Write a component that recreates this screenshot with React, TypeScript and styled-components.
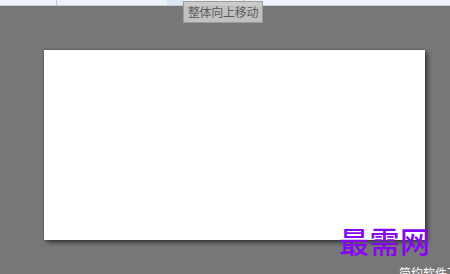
import React from "react";
import styled, { createGlobalStyle } from "styled-components";

const Global = createGlobalStyle`
  html, body { margin: 0; padding: 0; }
  body { width: 450px; height: 274px; overflow: hidden; background: #777777; font-family: "Noto Sans CJK SC", "Noto Sans", sans-serif; }
`;

const Screen = styled.div`
  position: relative;
  width: 450px;
  height: 274px;
  display: flex;
  flex-direction: column;
  overflow: hidden;
  background: #777777;
`;

const TopStrip = styled.div`
  height: 5px;
  background: #eef3fb;
  border-bottom: 1px solid #c9ccd1;
  display: flex;
  flex-shrink: 0;
`;

const StripCell = styled.div<{ $w: number; $active?: boolean; $divider?: boolean }>`
  width: ${(p) => p.$w}px;
  height: 100%;
  background: ${(p) => (p.$active ? "#dbe7f7" : "transparent")};
  border-right: ${(p) => (p.$divider ? "1px solid #c6cbd2" : "none")};
  flex-shrink: 0;
`;

const Stage = styled.div`
  flex: 1;
  padding: 44px 0 0 44px;
`;

const Slide = styled.div`
  width: 381px;
  height: 190px;
  background: #ffffff;
  box-shadow: 0 0 2px rgba(0, 0, 0, 0.45), 3px 3px 4px rgba(0, 0, 0, 0.45);
`;

const Tooltip = styled.div`
  position: absolute;
  left: 183px;
  top: 1px;
  width: 78px;
  height: 20px;
  background: rgba(200, 200, 200, 0.92);
  border: 1px solid #9c9c9c;
  display: flex;
  align-items: center;
  justify-content: center;
  font-size: 12px;
  color: #5b5b5b;
  line-height: 1;
  letter-spacing: -0.3px;
`;

const Watermark = styled.div`
  position: absolute;
  left: 339px;
  top: 225px;
  font-family: "Noto Sans CJK SC", sans-serif;
  font-size: 30px;
  font-weight: 500;
  line-height: 1;
  color: #8506f0;
  letter-spacing: 0.5px;
`;

const Caption = styled.div`
  position: absolute;
  left: 399px;
  top: 267px;
  font-size: 12px;
  line-height: 1;
  color: #ffffff;
  white-space: nowrap;
`;

export default function App() {
  return (
    <>
      <Global />
      <Screen>
        <TopStrip>
          <StripCell $w={56} $divider />
          <StripCell $w={110} />
          <StripCell $w={17} $active />
          <StripCell $w={59} $divider />
          <StripCell $w={208} />
        </TopStrip>
        <Stage>
          <Slide />
        </Stage>
        <Tooltip>整体向上移动</Tooltip>
        <Watermark>最需网</Watermark>
        <Caption>简约软件下载</Caption>
      </Screen>
    </>
  );
}
